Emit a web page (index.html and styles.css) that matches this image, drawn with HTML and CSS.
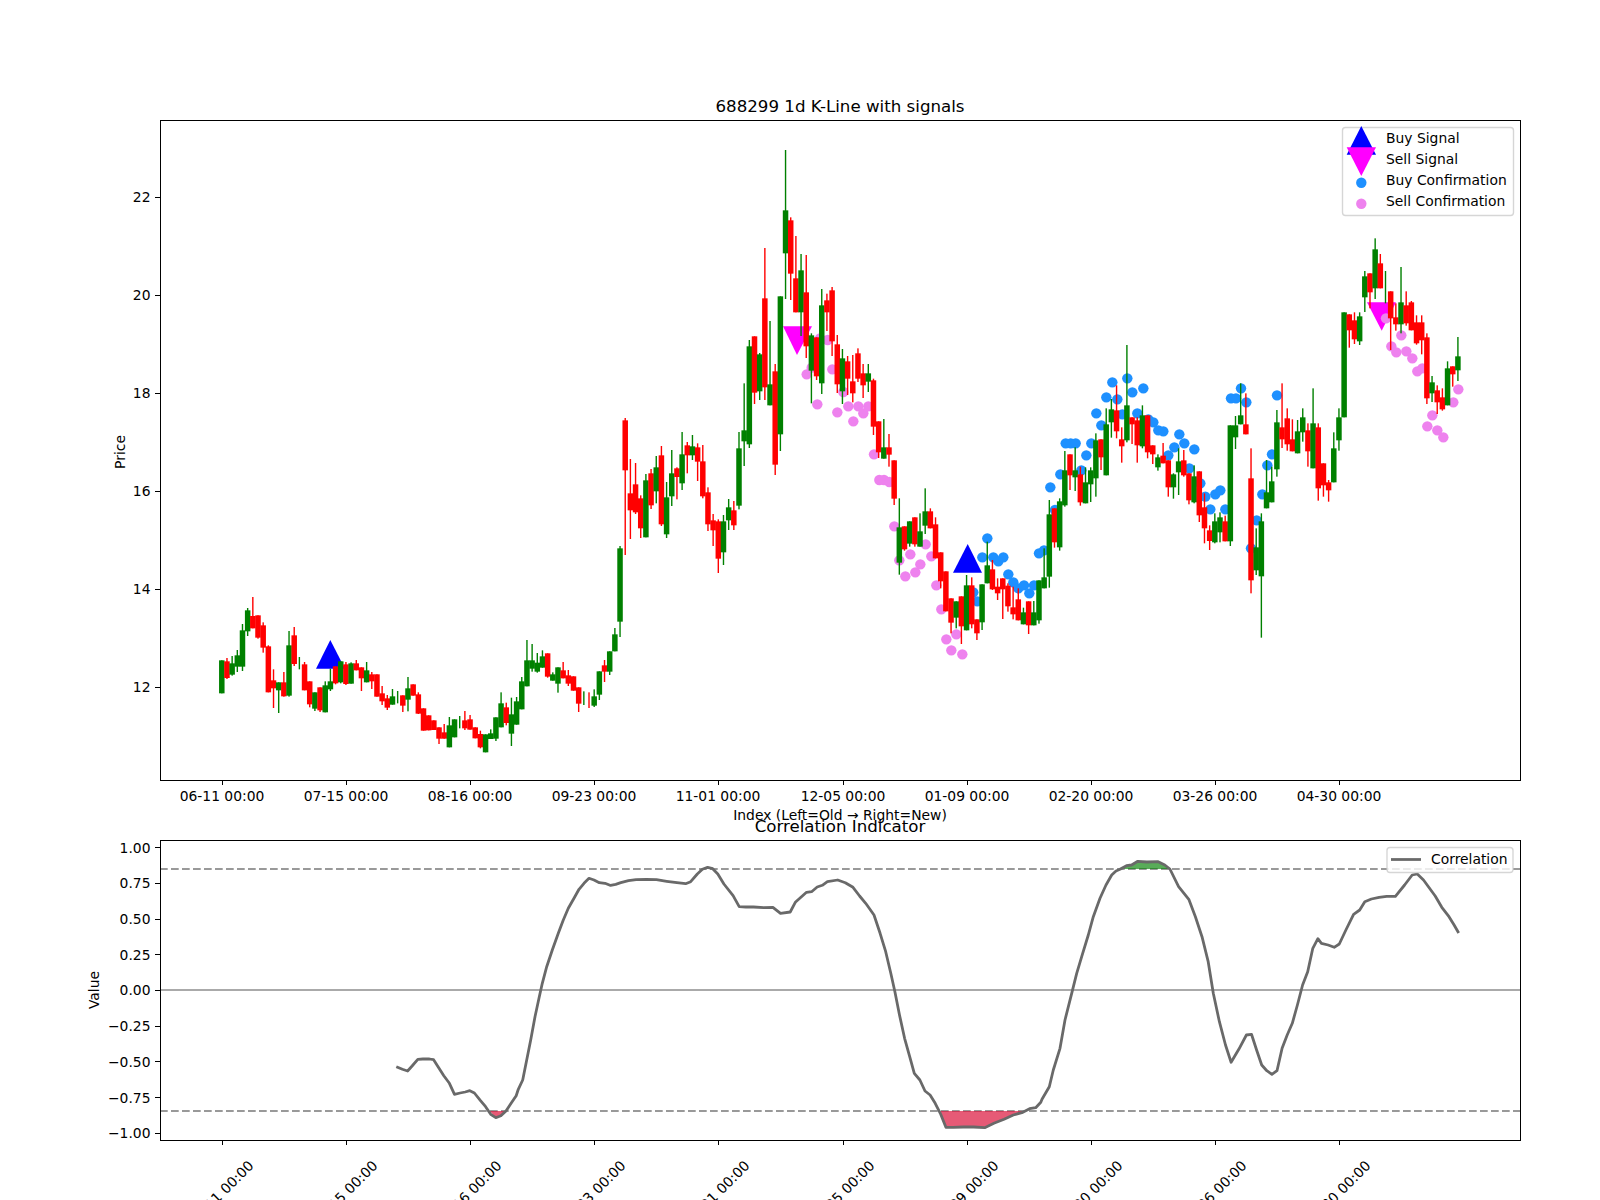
FILE: index.html
```html
<!DOCTYPE html>
<html lang="en">
<head>
<meta charset="utf-8">
<title>688299 1d K-Line with signals</title>
<link rel="stylesheet" href="styles.css">
</head>
<body>
<svg class="figure" viewBox="0 0 1600 1200" xmlns="http://www.w3.org/2000/svg">
  <!-- price axes -->
  <g id="signals">
    <polygon class="m-buy" points="330.3,640 316,668.7 345,668.7"/>
    <polygon class="m-buy" points="967.7,544 953,572.7 982,572.7"/>
    <polygon class="m-sell" points="783,326.3 812,326.3 797,355"/>
    <polygon class="m-sell" points="1367,302.3 1396,302.3 1381.7,330.7"/>
  </g>
  <g id="dots"></g>
  <g id="candles"></g>
  <rect class="frame" x="160.5" y="120.5" width="1360" height="660"/>
  <path class="ticks" d="M222.5 780v5M346.5 780v5M470.5 780v5M594.5 780v5M718.5 780v5M843.5 780v5M967.5 780v5M1091.5 780v5M1215.5 780v5M1339.5 780v5M155 197.5h5M155 295.5h5M155 393.5h5M155 491.5h5M155 589.5h5M155 687.5h5"/>
  <g class="tick-label">
    <text class="right" x="150.5" y="202">22</text>
    <text class="right" x="150.5" y="300">20</text>
    <text class="right" x="150.5" y="398">18</text>
    <text class="right" x="150.5" y="496">16</text>
    <text class="right" x="150.5" y="594">14</text>
    <text class="right" x="150.5" y="692">12</text>
    <text class="mid" x="222" y="801">06-11 00:00</text>
    <text class="mid" x="346" y="801">07-15 00:00</text>
    <text class="mid" x="470" y="801">08-16 00:00</text>
    <text class="mid" x="594" y="801">09-23 00:00</text>
    <text class="mid" x="718" y="801">11-01 00:00</text>
    <text class="mid" x="843" y="801">12-05 00:00</text>
    <text class="mid" x="967" y="801">01-09 00:00</text>
    <text class="mid" x="1091" y="801">02-20 00:00</text>
    <text class="mid" x="1215" y="801">03-26 00:00</text>
    <text class="mid" x="1339" y="801">04-30 00:00</text>
    <text class="mid" x="840" y="820">Index (Left=Old → Right=New)</text>
    <text class="mid" transform="translate(124.5 452) rotate(-90)">Price</text>
  </g>
  <text class="title" x="840" y="112">688299 1d K-Line with signals</text>
  <!-- price legend -->
  <rect class="legend" x="1342.5" y="127.5" width="171" height="88" rx="3"/>
  <polygon class="m-buy" points="1361.3,126 1346.7,154.7 1376,154.7"/>
  <polygon class="m-sell" points="1346.7,147.3 1376,147.3 1361.3,176"/>
  <circle class="d-buy" cx="1361.3" cy="182.7" r="5.2"/>
  <circle class="d-sell" cx="1361.3" cy="203.7" r="5.2"/>
  <g class="tick-label">
    <text x="1386" y="143">Buy Signal</text>
    <text x="1386" y="164">Sell Signal</text>
    <text x="1386" y="185">Buy Confirmation</text>
    <text x="1386" y="206">Sell Confirmation</text>
  </g>

  <!-- correlation axes -->
  <path class="zero" d="M160 990H1520"/>
  <path class="thresh" d="M160 869H1520M160 1111H1520"/>
  <g id="fills"></g>
  <polyline id="corr" class="corr" points=""/>
  <rect class="frame" x="160.5" y="840.5" width="1360" height="300"/>
  <path class="ticks" d="M222.5 1140v5M346.5 1140v5M470.5 1140v5M594.5 1140v5M718.5 1140v5M843.5 1140v5M967.5 1140v5M1091.5 1140v5M1215.5 1140v5M1339.5 1140v5M155 847.5h5M155 883.5h5M155 919.5h5M155 954.5h5M155 990.5h5M155 1026.5h5M155 1061.5h5M155 1097.5h5M155 1133.5h5"/>
  <g class="tick-label">
    <text class="right" x="150.5" y="853">1.00</text>
    <text class="right" x="150.5" y="888">0.75</text>
    <text class="right" x="150.5" y="924">0.50</text>
    <text class="right" x="150.5" y="960">0.25</text>
    <text class="right" x="150.5" y="995">0.00</text>
    <text class="right" x="150.5" y="1031">−0.25</text>
    <text class="right" x="150.5" y="1067">−0.50</text>
    <text class="right" x="150.5" y="1103">−0.75</text>
    <text class="right" x="150.5" y="1138">−1.00</text>
    <text class="mid" transform="translate(221 1193) rotate(-45)" y="5">06-11 00:00</text>
    <text class="mid" transform="translate(345 1193) rotate(-45)" y="5">07-15 00:00</text>
    <text class="mid" transform="translate(469 1193) rotate(-45)" y="5">08-16 00:00</text>
    <text class="mid" transform="translate(593 1193) rotate(-45)" y="5">09-23 00:00</text>
    <text class="mid" transform="translate(717 1193) rotate(-45)" y="5">11-01 00:00</text>
    <text class="mid" transform="translate(842 1193) rotate(-45)" y="5">12-05 00:00</text>
    <text class="mid" transform="translate(966 1193) rotate(-45)" y="5">01-09 00:00</text>
    <text class="mid" transform="translate(1090 1193) rotate(-45)" y="5">02-20 00:00</text>
    <text class="mid" transform="translate(1214 1193) rotate(-45)" y="5">03-26 00:00</text>
    <text class="mid" transform="translate(1338 1193) rotate(-45)" y="5">04-30 00:00</text>
    <text class="mid" transform="translate(99 990) rotate(-90)">Value</text>
  </g>
  <text class="title" x="840" y="832">Correlation Indicator</text>
  <!-- correlation legend -->
  <rect class="legend" x="1387" y="847.5" width="126" height="25" rx="3"/>
  <path class="corr" d="M1391 859.5H1421"/>
  <text class="tick-label" x="1431" y="864">Correlation</text>
</svg>
<script src="chart.js"></script>
</body>
</html>
```

FILE: styles.css
```css
html, body {
  margin: 0;
  padding: 0;
  background: #fff;
  overflow: hidden;
}
.figure {
  display: block;
  width: 1600px;
  height: 1200px;
  font-family: "DejaVu Sans", sans-serif;
}
.tick-label { font-size: 13.89px; fill: #000; }
.title { font-size: 16.67px; fill: #000; text-anchor: middle; }
.right { text-anchor: end; }
.mid { text-anchor: middle; }
.frame { fill: none; stroke: #000; stroke-width: 1px; shape-rendering: crispEdges; }
.ticks { fill: none; stroke: #000; stroke-width: 1px; shape-rendering: crispEdges; }
.legend { fill: #fff; fill-opacity: .8; stroke: #ccc; stroke-opacity: .8; stroke-width: 1.39px; }
.m-buy { fill: #0000ff; }
.m-sell { fill: #ff00ff; }
.d-buy { fill: #1e90ff; }
.d-sell { fill: #ee82ee; }
.up { fill: #ff0000; }
.down { fill: #008000; }
.zero { fill: none; stroke: #aaa; stroke-width: 2px; }
.thresh { fill: none; stroke: #999; stroke-width: 2px; stroke-dasharray: 7.7 3.3; }
.corr { fill: none; stroke: #696969; stroke-width: 2.78px; stroke-linejoin: round; }
.fill-low { fill: #dc143c; fill-opacity: .7; }
.fill-high { fill: #008000; fill-opacity: .65; }
```

FILE: chart.js
```js
const NS = 'http://www.w3.org/2000/svg';
function el(parent, tag, attrs) {
  const n = document.createElementNS(NS, tag);
  for (const k in attrs) n.setAttribute(k, attrs[k]);
  parent.appendChild(n);
  return n;
}

// Candles in order: colour, body top, body bottom, wick top, wick bottom,
// measured at 3x from the y origin of each batch.
const batches = [
 [540, `g 361 460 361 460|r 364 414 354 417|g 370 404 348 407|g 346 380 330 396|g 271 380 252 393|g 211 274 204 288|r 228 265 171 265|r 226 293 226 296|r 256 323 247 338|r 319 457 316 457|r 421 445 388 504|g 427 451 427 519|r 427 469 396 470|g 316 467 273 470|r 286 372 261 378|g 0 0 351 388|r 373 451 366 451|r 424 493 424 502|g 457 506 457 513|r 442 511 442 516|g 436 517 424 517|g 424 448 386 453|r 379 430 379 433|g 364 427 364 430|r 373 432 366 435|g 370 431 367 431|r 370 391 360 391|r 382 415 382 453|g 391 427 366 427|r 403 424 396 447|r 403 470 403 470|r 460 484 438 495|r 475 503 465 510|g 469 494 447 494|g 0 0 453 490|r 466 497 466 516|g 445 479 411 514|r 433 467 433 467|r 463 521 457 522|r 505 572 505 572|r 526 571 526 571|r 541 570 541 570|r 562 596 562 612|r 577 596 552 596|g 556 622 531 622|g 538 592 538 592|g 0 0 528 565|r 541 565 513 570|r 538 569 525 569|r 562 595 562 595`],
 [380, `r 1062 1102 1052 1105|g 1063 1117 1063 1117|g 1060 1077 1048 1077|g 1012 1076 1012 1083|g 970 1042 937 1042|r 982 1029 968 1036|g 1003 1061 953 1098|g 964 1034 951 1034|g 904 988 891 988|g 841 919 780 919|g 841 866 792 875|g 848 875 819 878|g 829 863 811 863|r 820 890 820 893|g 883 902 877 902|g 862 911 862 938|r 871 895 846 895|r 886 911 870 918|r 889 932 889 932|r 922 971 922 996|g 0 0 934 975|r 0 0 937 984|g 949 977 928 981|g 874 944 874 960|r 856 875 840 906|g 814 875 814 885|g 763 814 744 814|g 505 725 498 771|r 121 271 114 525|r 340 391 237 477|r 313 397 249 402|r 355 445 346 474|g 301 472 282 472|r 280 376 267 387|g 262 334 228 370|r 226 433 198 438|g 352 463 306 474|g 280 349 210 378|r 265 291 262 358|g 223 310 156 330|r 196 226 186 280|g 199 226 165 240|r 202 245 190 303|r 244 349 195 355|r 337 433 322 453|r 421 451 402 498|r 424 536 418 579|g 424 517 405 555|g 382 421 357 450|r 391 436 363 450|g 205 377 156 388|g 151 184 10 258`],
 [130, `g 649 943 630 954|r 619 788 619 822|g 673 784 669 810|r 505 772 354 810|g 763 826 573 826|r 724 1004 702 1035|g 499 913 499 963|g 241 370 60 507|r 271 431 262 510|r 445 547 318 547|g 421 547 372 618|r 487 649 375 684|g 616 722 610 820|r 622 739 622 750|g 526 760 477 792|r 511 547 491 603|r 481 634 471 678|r 643 763 615 789|g 685 784 657 822|r 694 746 678 795|r 754 790 675 817|r 670 746 655 756|r 730 766 702 804|g 730 755 702 786|r 751 890 746 915|r 874 967 874 984|g 952 986 867 986`],
 [420, `r 82 104 42 140|r 121 236 121 255|g 322 428 235 464|r 319 388 319 392|g 304 371 304 380|r 292 373 292 380|g 334 380 280 380|g 274 317 205 342|r 274 325 265 325|r 313 415 292 415|r 397 484 397 505|r 454 574 454 574|r 535 608 535 640|g 544 593 544 625|r 529 619 529 672|g 496 631 465 631|r 496 613 472 625|r 598 640 598 660|g 493 607 493 630|g 436 490 365 490|r 448 508 420 510|r 500 520 475 540|r 475 508 475 597|r 497 559 490 575|r 562 583 500 598|r 538 601 505 601|g 577 613 563 613|r 544 616 544 642|g 577 616 543 616|g 481 601 481 611`],
 [340, `g 712 745 625 745|g 523 710 480 743|r 505 607 505 623|g 484 622 475 632|g 391 496 333 500|r 343 406 343 450|g 391 412 322 453|r 403 487 380 497|g 427 490 382 490|g 391 433 382 486|g 301 415 280 470|r 298 352 298 390|g 253 406 205 406|g 208 247 177 293|r 211 274 136 295|r 298 319 262 368|g 196 301 15 307|r 232 253 232 312|r 241 316 232 368|g 226 319 196 325|r 226 337 226 355|r 316 343 316 372|g 352 382 343 392|r 347 370 309 370|r 361 442 361 470|g 403 442 400 476|g 364 397 325 465|r 361 406 330 410|r 400 481 400 493|g 409 487 376 490|r 394 526 394 546|r 502 565 460 610|r 571 603 556 630|g 544 607 520 610|g 532 577 517 607|r 544 604 527 604|g 256 604 256 618|g 256 292 228 327|g 226 253 130 253|r 253 283 160 283|r 415 721 325 760|g 622 691 565 705|g 544 709 520 893|g 457 505 360 505|g 424 487 380 487|g 247 388 210 410`],
 [220, `r 622 658 490 684|r 595 673 565 692|r 658 694 598 694|g 634 700 600 700|g 592 637 565 665|r 631 694 610 740|g 610 745 505 745|r 622 805 610 842|r 730 796 730 830|r 787 811 780 845|g 685 787 637 787|g 592 661 565 692|g 277 592 277 592|r 283 331 283 383|r 301 358 277 372|g 289 364 277 375|g 169 232 153 276|r 160 217 160 265|g 88 205 55 237|r 130 205 102 205|g 0 0 153 250|r 214 295 214 390|r 292 313 250 332|g 247 313 141 340|r 256 310 214 317|r 247 331 243 331|r 307 370 286 374|r 307 361 286 403|r 352 535 340 552|g 487 520 468 546|r 511 547 496 582|r 532 568 505 572|g 445 556 424 556|r 439 463 439 500|g 409 451 351 483`]
];

const candles = document.getElementById('candles');
let index = 0;
for (const [oy, rows] of batches) {
  for (const row of rows.split('|')) {
    const [c, bt, bb, wt, wb] = row.split(' ');
    const cls = c === 'r' ? 'up' : 'down';
    const cx = 221.8 + 5.172 * index;
    const y = v => oy + Number(v) / 3;
    el(candles, 'rect', { class: cls, x: (cx - 0.7).toFixed(2), y: y(wt), width: 1.4, height: y(wb) - y(wt) });
    if (Number(bb) > Number(bt)) {
      el(candles, 'rect', { class: cls, x: (cx - 2.75).toFixed(2), y: y(bt), width: 5.5, height: y(bb) - y(bt) });
    }
    index++;
  }
}

// Confirmation dots: origin x, origin y, points at 3x.
const dotSets = [
 ['d-sell', 740, 130, [[200,733],[232,823],[292,847],[325,829],[355,829],[340,874],[370,850],[385,829],[277,718],[263,630],[310,786],[215,713],[240,625]]],
 ['d-sell', 860, 420, [[42,103],[58,180],[72,180],[88,186],[103,319],[118,421],[136,469],[151,403],[166,457],[181,433],[197,373],[214,409],[229,496],[244,568],[259,658],[289,643],[274,691],[307,703]]],
 ['d-sell', 1240, 220, [[438,295],[454,379],[469,397],[484,346],[499,394],[517,415],[532,454],[547,445],[562,619],[577,586],[592,631],[610,652],[640,547],[655,508]]],
 ['d-buy', 860, 420, [[382,355],[367,412],[400,412],[415,424],[430,412],[445,463],[460,487],[475,505],[492,496],[508,520],[522,496],[537,400],[552,391],[571,202],[585,270],[601,163],[617,70],[632,70],[647,70],[664,151],[679,106],[694,70],[340,517],[352,544]]],
 ['d-buy', 1040, 340, [[169,220],[184,256],[199,172],[217,127],[232,178],[247,223],[262,115],[277,157],[292,220],[310,145],[325,238],[340,247],[355,271],[370,274],[385,346],[403,322],[418,283],[433,310],[448,385],[463,328],[481,430],[496,470],[511,508],[526,463],[541,451],[556,508],[573,175],[588,175],[603,145],[619,187],[633,625],[650,541],[667,463],[682,376],[696,343],[711,166]]]
];
const dots = document.getElementById('dots');
for (const [cls, ox, oy, pts] of dotSets) {
  for (const [x, y] of pts) {
    el(dots, 'circle', { class: cls, cx: ox + x / 3, cy: oy + y / 3, r: 5.2 });
  }
}

// Correlation curve: wide crops had x scale 1.96, y scale 3; narrow crops 3x.
const from = (ox, list) => list.map(([x, y]) => [ox + x / 1.96, 770 + y / 3]);
const fine = (ox, oy, list) => list.map(([x, y]) => [ox + x / 3, oy + y / 3]);
const curve = [
  ...from(80, [[620,890],[632,898],[642,903],[651,888],[662,868],[672,867],[685,867],[693,869],[703,893],[713,917],[724,940],[734,973],[745,969],[755,966],[764,962],[773,969],[785,992],[795,1010],[805,1033],[815,1043],[825,1037],[835,1023],[845,1000],[855,977]]),
  ...fine(510, 850, [[25,718],[38,690],[50,630],[62,570],[75,500],[88,440],[97,400],[110,350],[127,300],[145,250],[160,210],[175,175],[192,145],[207,118],[222,100],[237,85],[252,90],[268,98],[285,100],[300,106]]),
  ...from(80, [[1040,346],[1050,343],[1060,338],[1075,332],[1090,329],[1110,328],[1130,329],[1150,334],[1170,338],[1187,341],[1197,335],[1210,312],[1220,298],[1230,292],[1240,296],[1250,312],[1262,342],[1280,377],[1292,410],[1305,411],[1320,411],[1340,413],[1358,412],[1373,430],[1392,426],[1402,397],[1424,367],[1434,365],[1445,351],[1455,346],[1465,335],[1485,330],[1500,338],[1515,352],[1528,378],[1540,400]]),
  ...from(800, [[145,435],[157,490],[168,545],[178,610],[186,665],[195,735],[205,805],[215,860],[224,910],[235,930],[245,963],[255,975],[265,1000],[275,1030],[286,1072],[300,1072],[320,1071],[340,1071],[362,1073],[380,1060],[400,1048],[418,1035],[435,1028],[450,1016],[462,1013],[472,997]]),
  ...fine(1020, 860, [[66,718],[88,680],[100,630],[120,565],[135,480],[155,400],[170,340],[185,290],[205,225],[220,170],[240,115],[258,75],[275,45],[288,33],[300,28]]),
  ...from(800, [[640,287],[650,285],[662,274],[680,276],[702,275],[715,285],[725,297],[742,350],[762,388],[775,440],[788,500],[800,575],[810,670],[822,755],[834,825],[845,877],[860,838],[875,795],[885,793],[895,840],[905,885],[915,902],[925,913],[935,902],[945,835],[955,795],[965,760],[975,705],[985,645],[995,605],[1005,535],[1015,506],[1022,520],[1035,525],[1047,532],[1057,522],[1070,480],[1085,433],[1097,420],[1107,395],[1120,387],[1135,382],[1150,379],[1167,379],[1185,345],[1200,315],[1210,312],[1222,330],[1245,378],[1258,412],[1272,440],[1282,465],[1291,489]])
];
const toStr = pts => pts.map(p => p[0].toFixed(1) + ',' + p[1].toFixed(1)).join(' ');
document.getElementById('corr').setAttribute('points', toStr(curve));

const fills = document.getElementById('fills');
el(fills, 'polygon', { class: 'fill-low', points: toStr(from(80, [[803,1023],[815,1043],[825,1037],[832,1023]])) });
el(fills, 'polygon', { class: 'fill-low', points: toStr(from(800, [[275,1023],[286,1072],[300,1072],[320,1071],[340,1071],[362,1073],[380,1060],[400,1048],[418,1035],[435,1028],[440,1023]])) });
el(fills, 'polygon', { class: 'fill-high', points: toStr(from(800, [[634,297],[640,287],[650,285],[662,274],[680,276],[702,275],[715,285],[725,297]])) });
```
